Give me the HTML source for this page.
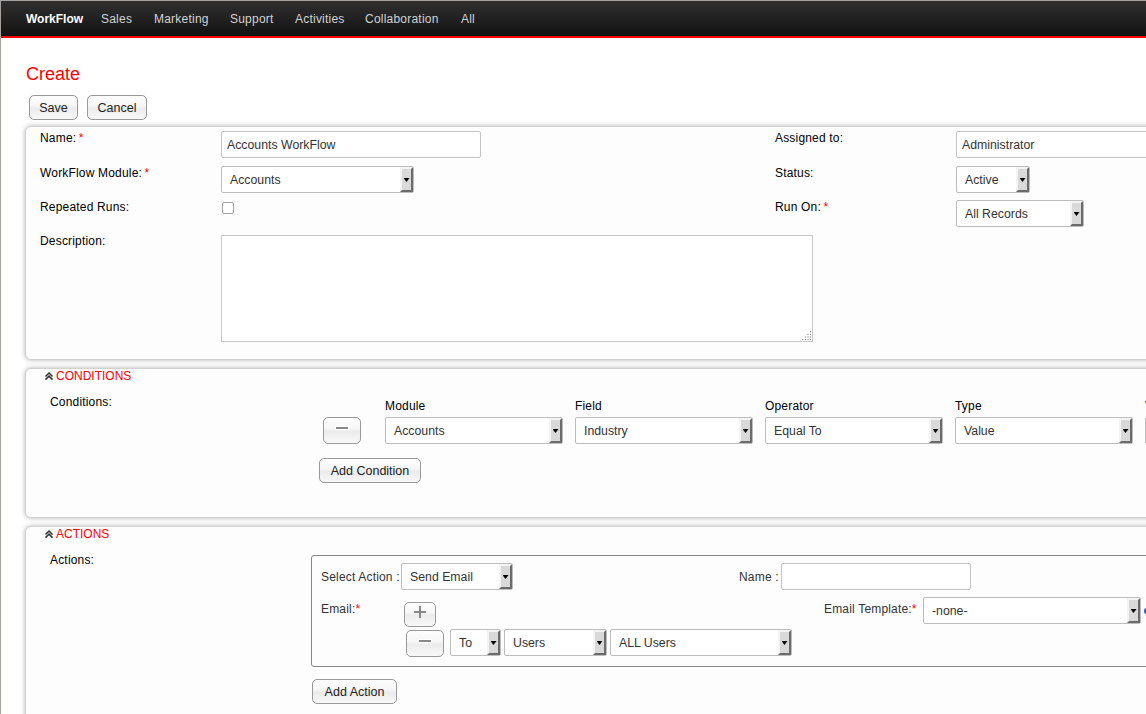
<!DOCTYPE html>
<html><head><meta charset="utf-8">
<style>
*{box-sizing:border-box;margin:0;padding:0}
html,body{width:1146px;height:714px;overflow:hidden;background:#fff}
body{position:relative;font-family:"Liberation Sans",sans-serif;font-size:12px;color:#000}
.a{position:absolute;white-space:nowrap}
#frame{position:absolute;left:0;top:0;width:1146px;height:714px;border-left:1px solid #a4a19e;border-top:1px solid #a4a19e;pointer-events:none;z-index:50}
#hdr{position:absolute;left:0;top:0;width:1146px;height:38px;background:linear-gradient(#303030,#121212);border-bottom:2px solid #f00}
#hdr .a{color:#d2d2d2;font-size:12px;top:12px;line-height:14px;letter-spacing:.22px}
#hdr .b{letter-spacing:0}
#hdr .b{color:#fff;font-weight:bold}
.ttl{color:#f00;font-size:18px}
.btn{position:absolute;border:1px solid #999;border-radius:5px;background:linear-gradient(#fdfdfd 0%,#f7f7f7 40%,#ebebeb 55%,#f3f3f3 80%,#f8f8f8 100%);color:#222;font-size:12.5px;text-align:center}
.panel{position:absolute;left:25px;width:1140px;background:#fdfdfd;border:1px solid #d2d2d2;border-radius:6px;box-shadow:0 0 5px rgba(0,0,0,.3)}
.lbl{position:absolute;white-space:nowrap;font-size:12px;line-height:14px;color:#000;letter-spacing:.18px}
.req{color:#f00}
.inp{position:absolute;background:#fff;border:1px solid #c4c4c4;border-radius:2px;height:27px;color:#333;font-size:12.3px;line-height:27px;padding-left:5px;white-space:nowrap;overflow:hidden}
.sel{position:absolute;background:#fff;border:1px solid #bdbdbd;border-radius:2px;height:27px;color:#333;font-size:12.3px;line-height:27px;padding-left:8px;white-space:nowrap;overflow:hidden}
.sel:after{content:"";position:absolute;right:0;top:0;width:13px;height:25px;box-sizing:border-box;border:2px solid;border-color:#f4f4f4 #6b6b6b #6b6b6b #f4f4f4;background:#d9d9d9}
.sel:before{content:"";position:absolute;right:3.5px;top:11px;width:6px;height:4px;background:#000;clip-path:polygon(0 0,100% 0,50% 100%);z-index:2}
.chev{position:absolute;width:9px;height:9px}
.sec{position:absolute;color:#f00;font-size:12px;line-height:14px}
.mi{position:absolute;left:12px;top:9px;width:12px;height:2px;background:#888;box-shadow:0 0 1px 1px #fff}
.pl{position:absolute;left:9px;top:8px;width:12px;height:2px;background:#888}
.pl2{position:absolute;left:14px;top:3px;width:2px;height:12px;background:#888}
</style></head><body>
<div id="hdr">
  <span class="a b" style="left:26px">WorkFlow</span>
  <span class="a" style="left:101px">Sales</span>
  <span class="a" style="left:154px">Marketing</span>
  <span class="a" style="left:230px">Support</span>
  <span class="a" style="left:295px">Activities</span>
  <span class="a" style="left:365px">Collaboration</span>
  <span class="a" style="left:461px">All</span>
</div>
<div id="frame"></div>

<span class="a ttl" style="left:26px;top:64px;line-height:20px">Create</span>
<div class="btn" style="left:29px;top:95px;width:49px;height:25px;line-height:25px">Save</div>
<div class="btn" style="left:87px;top:95px;width:60px;height:25px;line-height:25px">Cancel</div>

<!-- panel 1 -->
<div class="panel" style="top:126px;height:234px"></div>
<span class="lbl" style="left:40px;top:131px">Name: <span class="req" style="margin-left:-1px">*</span></span>
<div class="inp" style="left:221px;top:131px;width:260px">Accounts WorkFlow</div>
<span class="lbl" style="left:40px;top:166px">WorkFlow Module: <span class="req" style="margin-left:-1px">*</span></span>
<div class="sel" style="left:221px;top:166px;width:193px">Accounts</div>
<span class="lbl" style="left:40px;top:200px">Repeated Runs:</span>
<div class="a" style="left:222px;top:202px;width:12px;height:12px;border:1px solid #a6a3a0;border-radius:2px;background:#fff"></div>
<span class="lbl" style="left:40px;top:234px">Description:</span>
<div class="a" style="left:221px;top:235px;width:592px;height:107px;border:1px solid #c8c8c8;background:#fff"></div>
<svg class="a" style="left:800px;top:328px" width="14" height="14" viewBox="0 0 14 14"><circle cx="10.5" cy="3.6" r="0.65" fill="#8a8a8a"/><circle cx="8" cy="6.4" r="0.65" fill="#8a8a8a"/><circle cx="10.5" cy="6.4" r="0.65" fill="#8a8a8a"/><circle cx="5.4" cy="9" r="0.65" fill="#8a8a8a"/><circle cx="8" cy="9" r="0.65" fill="#8a8a8a"/><circle cx="10.5" cy="9" r="0.65" fill="#8a8a8a"/><circle cx="2.7" cy="11.4" r="0.65" fill="#8a8a8a"/><circle cx="5.4" cy="11.4" r="0.65" fill="#8a8a8a"/><circle cx="8" cy="11.4" r="0.65" fill="#8a8a8a"/><circle cx="10.5" cy="11.4" r="0.65" fill="#8a8a8a"/></svg>

<span class="lbl" style="left:775px;top:131px">Assigned to:</span>
<div class="inp" style="left:956px;top:131px;width:260px">Administrator</div>
<span class="lbl" style="left:775px;top:166px">Status:</span>
<div class="sel" style="left:956px;top:166px;width:74px">Active</div>
<span class="lbl" style="left:775px;top:200px">Run On: <span class="req" style="margin-left:-1px">*</span></span>
<div class="sel" style="left:956px;top:200px;width:128px">All Records</div>

<!-- panel 2 -->
<div class="panel" style="top:368px;height:150px"></div>
<svg class="chev" style="left:44px;top:370px;width:10px;height:12px" viewBox="0 0 10 12"><path d="M1.5 6.5 L5 3 L8.5 6.5 M1.5 9.6 L5 6.1 L8.5 9.6" fill="none" stroke="#333" stroke-width="1.5"/></svg>
<span class="sec" style="left:56px;top:369px">CONDITIONS</span>
<span class="lbl" style="left:50px;top:395px">Conditions:</span>
<div class="btn" style="left:323px;top:417px;width:38px;height:27px"><i class="mi"></i></div>
<span class="lbl" style="left:385px;top:399px">Module</span>
<div class="sel" style="left:385px;top:417px;width:178px">Accounts</div>
<span class="lbl" style="left:575px;top:399px">Field</span>
<div class="sel" style="left:575px;top:417px;width:178px">Industry</div>
<span class="lbl" style="left:765px;top:399px">Operator</span>
<div class="sel" style="left:765px;top:417px;width:178px">Equal To</div>
<span class="lbl" style="left:955px;top:399px">Type</span>
<div class="sel" style="left:955px;top:417px;width:178px">Value</div>
<span class="lbl" style="left:1145px;top:399px">Value</span>
<div class="sel" style="left:1145px;top:417px;width:178px"></div>
<div class="btn" style="left:319px;top:458px;width:102px;height:25px;line-height:25px">Add Condition</div>

<!-- panel 3 -->
<div class="panel" style="top:526px;height:260px"></div>
<svg class="chev" style="left:44px;top:528px;width:10px;height:12px" viewBox="0 0 10 12"><path d="M1.5 6.5 L5 3 L8.5 6.5 M1.5 9.6 L5 6.1 L8.5 9.6" fill="none" stroke="#333" stroke-width="1.5"/></svg>
<span class="sec" style="left:56px;top:527px">ACTIONS</span>
<span class="lbl" style="left:50px;top:553px">Actions:</span>
<div class="a" style="left:311px;top:555px;width:900px;height:112px;border:1px solid #868686;border-radius:3px"></div>
<span class="lbl" style="left:321px;top:570px;color:#333">Select Action :</span>
<div class="sel" style="left:401px;top:563px;width:112px">Send Email</div>
<span class="lbl" style="left:739px;top:570px;color:#333">Name :</span>
<div class="inp" style="left:781px;top:563px;width:190px"></div>
<span class="lbl" style="left:321px;top:602px;color:#333">Email:<span class="req">*</span></span>
<div class="btn" style="left:404px;top:602px;width:32px;height:25px"><i class="pl"></i><i class="pl2"></i></div>
<div class="btn" style="left:406px;top:630px;width:38px;height:27px"><i class="mi"></i></div>
<div class="sel" style="left:450px;top:629px;width:51px">To</div>
<div class="sel" style="left:504px;top:629px;width:103px">Users</div>
<div class="sel" style="left:610px;top:629px;width:182px">ALL Users</div>
<span class="lbl" style="left:824px;top:602px;color:#333">Email Template:<span class="req">*</span></span>
<div class="sel" style="left:923px;top:597px;width:218px">-none-</div>
<span class="a" style="left:1144px;top:608px;width:5px;height:6px;border-radius:3px;background:#2a64d0"></span>
<div class="btn" style="left:312px;top:679px;width:85px;height:25px;line-height:25px">Add Action</div>
</body></html>
